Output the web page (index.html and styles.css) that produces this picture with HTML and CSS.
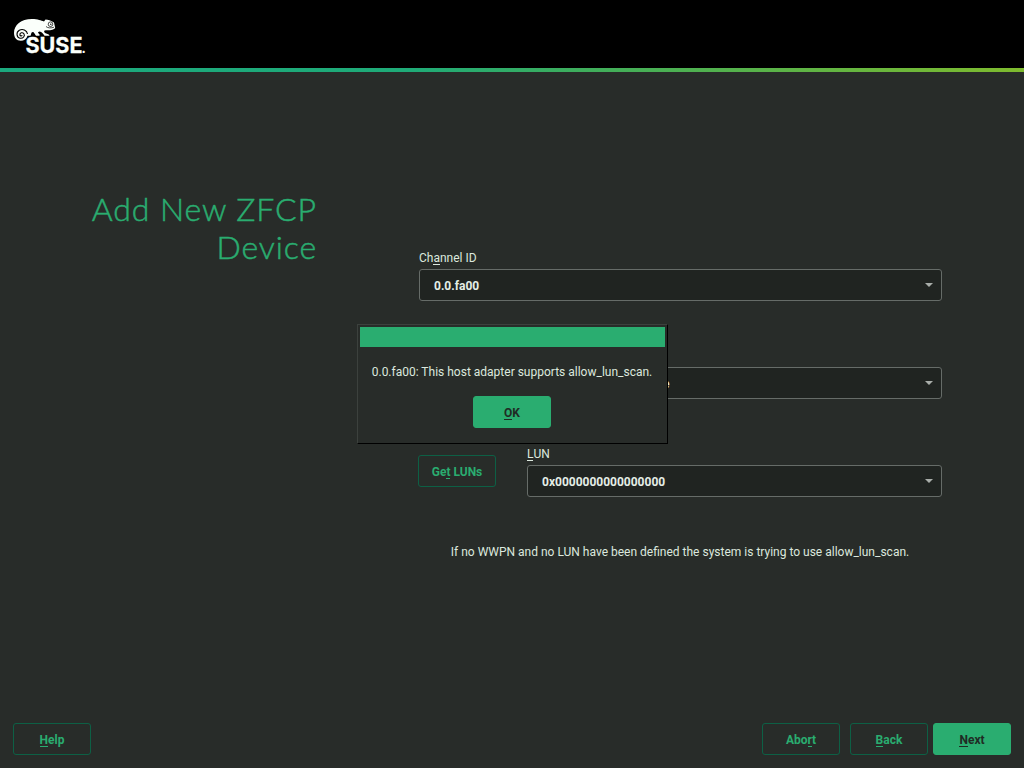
FILE: index.html
```html
<!DOCTYPE html>
<html lang="en">
<head>
<meta charset="utf-8">
<title>Add New ZFCP Device</title>
<link rel="stylesheet" href="styles.css">
</head>
<body>
<div class="installer">
  <header class="banner">
    <svg class="logo" width="80" height="44" viewBox="13 17 80 44" role="img" aria-label="SUSE">
      <path class="logo-body" d="M14 33C14 25 21 19 32 19C38 19 41 20.500 44 21.500L45.500 19.500C48 20 51 20.300 54 22.500L55.200 28C54 30 50 30.500 46 30.300C44 30.200 43.500 31.500 45 33C46.500 34 48.800 33.500 49.500 35.700H44.500C43 33.500 42 31.800 39.500 31.500C37.500 31.800 37.500 33 39.500 34.200V35.700H36C34.500 34 34.500 32.500 33 32C31 32 31.500 33.500 30.500 35.700H27.500C26.500 39 24 40.700 20.800 40.700C16.500 40.700 14 37.500 14 33Z"/>
      <path class="logo-spiral" d="M27.500 34C27 30 22.500 28.500 19.300 30.200C15.800 32.300 16.500 37.300 20 38.200C23.200 38.800 25.300 35.900 23.900 33.700C22.600 31.900 19.600 32.700 19.900 35C20.200 36.200 21.800 36.200 22.200 35.200"/>
      <circle class="logo-eye" cx="50.500" cy="24.200" r="2.300"/>
      <circle class="logo-pupil" cx="50.800" cy="24.200" r=".7"/>
      <path class="logo-eye" d="M46 26.500C48 28.300 51 28.200 54 27.200"/>
      <text class="logo-text" x="25.500" y="52.600" textLength="57" lengthAdjust="spacingAndGlyphs">SUSE</text>
      <text class="logo-dot" x="81.500" y="52.600">.</text>
    </svg>
  </header>
  <main class="content">
    <h1 class="title">Add New ZFCP<br>Device</h1>
    <form class="form">
      <div class="row">
        <div class="field">
          <label class="label">Ch<span class="key">a</span>nnel ID</label>
          <div class="combo">0.0.fa00<svg class="arrow" width="8" height="4" viewBox="0 0 8 4"><path d="M0 0H8L4 4Z"/></svg></div>
        </div>
      </div>
      <div class="row">
        <div class="field">
          <label class="label"></label>
          <div class="combo combo-tail">e<svg class="arrow" width="8" height="4" viewBox="0 0 8 4"><path d="M0 0H8L4 4Z"/></svg></div>
        </div>
      </div>
      <div class="row">
        <button type="button" class="button button-scan">Ge<span class="key">t</span> LUNs</button>
        <div class="field">
          <label class="label"><span class="key">L</span>UN</label>
          <div class="combo">0x0000000000000000<svg class="arrow" width="8" height="4" viewBox="0 0 8 4"><path d="M0 0H8L4 4Z"/></svg></div>
        </div>
      </div>
      <p class="note">If no WWPN and no LUN have been defined the system is trying to use allow_lun_scan.</p>
    </form>
  </main>
  <footer class="actions">
    <button type="button" class="button button-help"><span class="key">H</span>elp</button>
    <button type="button" class="button button-abort">Abo<span class="key">r</span>t</button>
    <button type="button" class="button button-back"><span class="key">B</span>ack</button>
    <button type="button" class="button primary"><span class="key">N</span>ext</button>
  </footer>
  <section class="dialog" role="dialog">
    <div class="dialog-bar"></div>
    <div class="dialog-body">
      <p class="dialog-text">0.0.fa00: This host adapter supports allow_lun_scan.</p>
      <button type="button" class="button primary"><span class="key">O</span>K</button>
    </div>
  </section>
</div>
</body>
</html>
```

FILE: styles.css
```css
* { box-sizing: border-box; }

body {
  margin: 0;
  background: #282c29;
  color: #dce8de;
  font: 12px/14px Roboto, sans-serif;
}

.installer {
  position: relative;
  width: 1024px;
  height: 768px;
  display: flex;
  flex-direction: column;
  overflow: hidden;
}

.banner {
  height: 72px;
  flex: none;
  padding: 17px 13px 0;
  background: linear-gradient(90deg, #1ba97e 0%, #1fab78 40%, #3fae5c 57%, #7fbb2e 100%) bottom / 100% 4px no-repeat #000;
}

.logo { display: block; overflow: visible; }
.logo-body { fill: #fbfffb; }
.logo-spiral { fill: none; stroke: #000; stroke-width: 1.1; }
.logo-eye { fill: none; stroke: #000; stroke-width: .7; }
.logo-pupil { fill: #000; }
.logo-text {
  fill: #fbfffb;
  stroke: #fbfffb;
  stroke-width: .3;
  font: 700 21.5px Inter, sans-serif;
}
.logo-dot {
  fill: #fbfffb;
  font: 700 13px Inter, sans-serif;
}

.content {
  flex: 1;
  display: grid;
  grid-template-columns: 317px 523px;
  column-gap: 102px;
  align-items: start;
}

.title {
  margin: 118px 0 0;
  color: #2aad70;
  font: 300 32px/38px Lato, sans-serif;
  letter-spacing: .9px;
  text-align: right;
  -webkit-text-stroke: .5px #2aad70;
}

.form { padding-top: 179px; }

.row {
  display: flex;
  align-items: flex-end;
  height: 50px;
  margin-bottom: 48px;
}

.field {
  flex: 1;
  display: flex;
  flex-direction: column;
  gap: 4px;
}

.label { height: 14px; }

.key {
  display: inline-block;
  height: 14px;
  border-bottom: 1px solid currentColor;
}

.combo {
  display: flex;
  align-items: center;
  justify-content: space-between;
  height: 32px;
  padding: 1px 8px 0 14px;
  border: 1px solid #666c68;
  border-radius: 3px;
  background: #202421;
  color: #e4eee6;
  font-weight: 700;
}

.combo-tail { padding-left: 243px; }
.arrow { margin-bottom: 2px; fill: #a9aeaa; }

.button {
  width: 78px;
  height: 32px;
  flex: none;
  padding: 2px 0 0;
  border: 1px solid #0d6045;
  border-radius: 3px;
  background: transparent;
  color: #2aad70;
  font: 700 12px/14px Roboto, sans-serif;
}

.primary {
  border-color: #2aad70;
  background: #2aad70;
  color: #202b24;
}

.button-scan { margin: 0 31px 10px -1px; }

.note {
  margin: 0 1px 0 0;
  text-align: center;
}

.actions {
  display: flex;
  padding: 0 13px 13px;
}

.button-help { margin-right: auto; }
.button-abort { margin-right: 10px; }
.button-back { margin-right: 5px; }

.dialog {
  position: absolute;
  left: 357px;
  top: 324px;
  width: 311px;
  height: 120px;
  padding: 2px;
  border: 1px solid;
  border-color: #3c413d #000 #000 #3c413d;
  background: #282c29;
  text-align: center;
}

.dialog-bar {
  height: 20px;
  background: #2aad70;
}

.dialog-body { padding: 18px 1px 0 0; }
.dialog-text { margin: 0 0 17px; }
```
